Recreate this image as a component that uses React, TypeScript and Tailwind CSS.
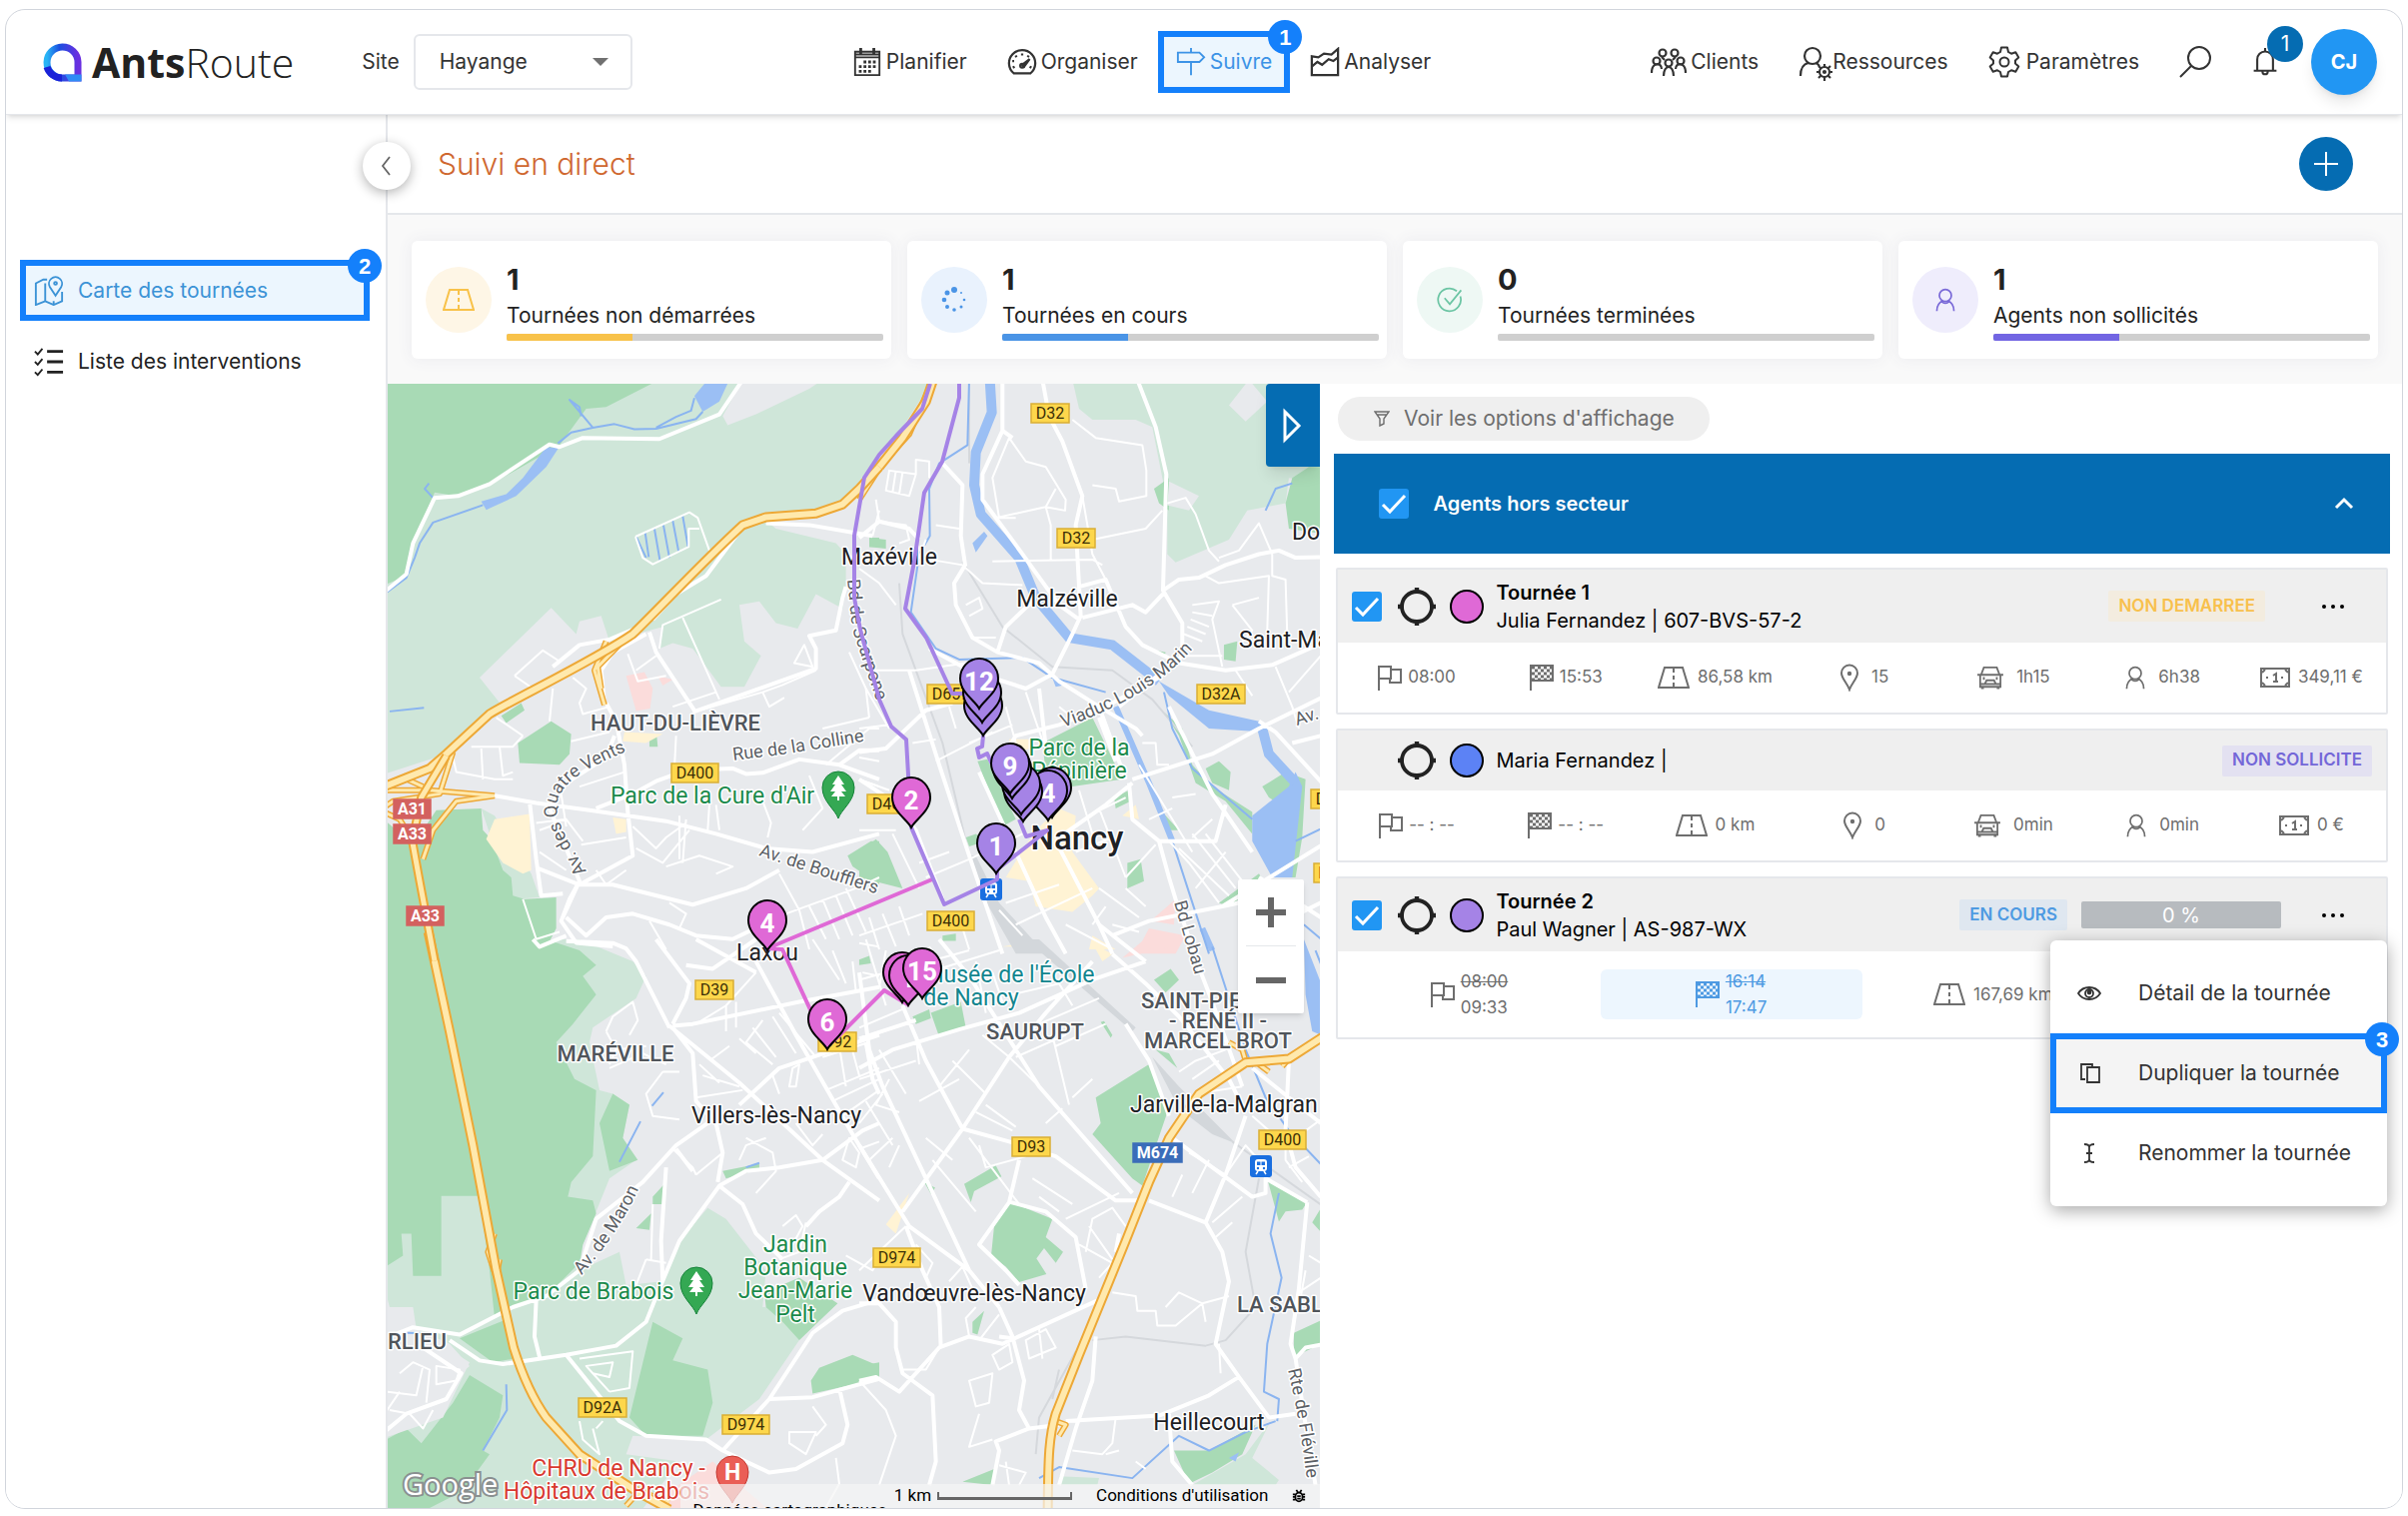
import { useState, type ReactNode } from 'react';
import { clsx } from 'clsx';

type IconProps = { className?: string };

/* ---------- Icons ---------- */

function Svg({ className, box = '0 0 32 32', width = 2, children }: IconProps & { box?: string; width?: number; children: ReactNode }) {
  return (
    <svg className={clsx('shrink-0', className)} viewBox={box} fill="none" stroke="currentColor" strokeWidth={width} aria-hidden="true">
      {children}
    </svg>
  );
}

const CalendarIcon = ({ className }: IconProps) => (
  <Svg className={className}>
    <path d="M3 5h26v25H3zM3 11h26" />
    <path d="M3 8h26" strokeWidth={2} />
    <path d="M9 1v7M23 1v7" strokeWidth={3} />
    <path d="M12 16h3m2 0h3m2 0h3M7 21h3m2 0h3m2 0h3m2 0h3M7 26h3m2 0h3m2 0h3" strokeWidth={3} />
  </Svg>
);

const GaugeIcon = ({ className }: IconProps) => (
  <Svg className={className} width={2.4}>
    <path d="M7 28a14 14 0 1 1 18 0z" />
    <path d="M16 7v2M9 9l1 2M23 9l-1 2M5.500 15h2M6 22l2-1M26 22l-2-1" />
    <path d="M16 19l8-6-6 8z" fill="currentColor" />
    <circle cx="16" cy="20" r="2" />
  </Svg>
);

const SignIcon = ({ className }: IconProps) => (
  <Svg className={className}>
    <path d="M2 6h23l5 5-5 5H2zM16 1v5M16 16v14" />
  </Svg>
);

const ChartIcon = ({ className }: IconProps) => (
  <Svg className={className} width={2.4}>
    <path d="M2 10v20h28V2l-7 6-8-1-6 4zM2 21l6-5 5 3 7-6 5 2 5-4" />
  </Svg>
);

const ClientsIcon = ({ className }: IconProps) => (
  <Svg className={className} box="0 0 36 32" width={2.2}>
    <circle cx="12" cy="7" r="3.500" />
    <circle cx="24" cy="7" r="3.500" />
    <circle cx="6" cy="15" r="3.500" />
    <circle cx="30" cy="15" r="3.500" />
    <circle cx="18" cy="17" r="3.500" />
    <path d="M1 27c0-11 10-11 10-4M35 27c0-11-10-11-10-4M13 30c0-12 10-12 10 0M11 11l3 3M25 11l-3 3" />
  </Svg>
);

const ResourceIcon = ({ className }: IconProps) => (
  <Svg className={className} box="0 0 34 36" width={2.2}>
    <circle cx="14" cy="10" r="8" />
    <path d="M2 30c0-7 3-12 8-13M18 17l3 3" />
    <circle cx="26" cy="26" r="5" />
    <circle cx="26" cy="26" r="1" />
    <path d="M26 18v3M26 31v4M18 26h3M31 26h3M20 20l3 3M29 29l3 3M32 20l-3 3M23 29l-3 3" />
  </Svg>
);

const GearIcon = ({ className }: IconProps) => (
  <Svg className={className}>
    <path
      strokeLinejoin="round"
      d="M13 1.500h6l1 4.500 3 1.700 4.300-1.400 3 5.200-3.300 3v3l3.300 3-3 5.200-4.300-1.400-3 1.700-1 4.500h-6l-1-4.500-3-1.700-4.300 1.400-3-5.200 3.300-3v-3l-3.300-3 3-5.200L9 7.700 12 6z"
    />
    <circle cx="16" cy="16" r="4.500" />
  </Svg>
);

const SearchIcon = ({ className }: IconProps) => (
  <Svg className={className}>
    <circle cx="20" cy="12" r="11" />
    <path d="M12 20L1 31" />
  </Svg>
);

const BellIcon = ({ className }: IconProps) => (
  <Svg className={className} width={2.4}>
    <path d="M3 26h26M7 26V13a9 9 0 0 1 18 0v13M16 0v4M13 27a3 3 0 0 0 6 0" />
  </Svg>
);

const MapPinIcon = ({ className }: IconProps) => (
  <Svg className={className}>
    <path d="M12 27L2 31V8l8-4h4M12 27l9 4 9-4V17M12 27V8M21 31v-4" />
    <path d="M23 21l-6-9a7 7 0 1 1 12 0z" />
    <circle cx="23" cy="8" r="1.500" />
  </Svg>
);

const ChecklistIcon = ({ className }: IconProps) => (
  <Svg className={className} width={3}>
    <path d="M14 5h17M14 16h17M14 27h17" />
    <path d="M1 5l3 3 5-6M1 16l3 3 5-6M1 27l3 3 5-6" strokeWidth={2} />
  </Svg>
);

const RoadIcon = ({ className }: IconProps) => (
  <Svg className={className} box="0 0 32 24">
    <path d="M7 2h18l6 20H1zM16 2v5M16 10v4M16 17v5" />
  </Svg>
);

const DotsSpinner = ({ className }: IconProps) => (
  <svg className={className} viewBox="0 0 26 26" fill="currentColor" aria-hidden="true">
    <circle cx="13" cy="3" r="3" />
    <circle cx="6" cy="6" r="2.500" />
    <circle cx="3" cy="13" r="2.300" />
    <circle cx="6" cy="20" r="2" />
    <circle cx="13" cy="23" r="1.800" />
    <circle cx="20" cy="20" r="1.500" />
    <circle cx="23" cy="13" r="1.300" />
    <circle cx="20" cy="6" r="1" />
  </svg>
);

const CheckCircle = ({ className }: IconProps) => (
  <Svg className={className}>
    <path d="M24 6a13 13 0 1 0 4 6M10 14l6 7L29 5" />
  </Svg>
);

const PersonIcon = ({ className }: IconProps) => (
  <Svg className={className} box="0 0 24 28">
    <circle cx="12" cy="9" r="7" />
    <path d="M2 27c0-6 3-10 7-12M22 27c0-6-3-10-7-12M8 15c1 4 7 4 8 0" />
  </Svg>
);

const FunnelIcon = ({ className }: IconProps) => (
  <Svg className={className} box="0 0 16 16" width={1.4}>
    <path d="M1 1h14L10 8v5l-4 2V8zM3 4h10" />
  </Svg>
);

const TargetIcon = ({ className }: IconProps) => (
  <Svg className={className} box="0 0 38 38" width={3.8}>
    <circle cx="19" cy="19" r="15" />
    <path d="M19 0v6M19 32v6M0 19h6M32 19h6" strokeWidth={4.4} />
  </Svg>
);

const FlagIcon = ({ className }: IconProps) => (
  <Svg className={className} box="0 0 24 26">
    <path d="M1 26V2h12v12H1M13 5h10v13H12v-4" />
  </Svg>
);

const FinishIcon = ({ className }: IconProps) => (
  <Svg className={className} box="0 0 24 26">
    <path d="M1 26V1h22v15H1" />
    <path d="M2 3h21M2 9h21M2 15h21" strokeDasharray="3 3" strokeWidth={3} />
    <path d="M5 6h18M5 12h18" strokeDasharray="3 3" strokeWidth={3} />
  </Svg>
);

const PlaceIcon = ({ className }: IconProps) => (
  <Svg className={className} box="0 0 20 28">
    <path d="M10 26C8 20 2 15 2 9.500a8 8 0 0 1 16 0C18 15 12 20 10 26z" />
    <circle cx="10" cy="10" r="1.200" fill="currentColor" />
  </Svg>
);

const CarIcon = ({ className }: IconProps) => (
  <Svg className={className} box="0 0 28 26">
    <path d="M4 10l3-8h14l3 8M0 10h28M3 10v13h22V10M3 20h22M8 20l2-4h8l2 4" />
    <path d="M6 14h2M20 14h2M4 24h3M21 24h3" strokeWidth={3} />
  </Svg>
);

const MoneyIcon = ({ className }: IconProps) => (
  <Svg className={className} box="0 0 30 20">
    <path d="M1 1h28v18H1z" />
    <path d="M13 8l3-2v8M13 14h5" />
    <path d="M7 9v2M22 9v2M2 5l3-3M28 5l-3-3M2 15l3 3M28 15l-3 3" />
  </Svg>
);

const EyeIcon = ({ className }: IconProps) => (
  <Svg className={className} box="0 0 24 14" width={1.8}>
    <path d="M1 7c5-8 17-8 22 0-5 8-17 8-22 0z" />
    <circle cx="12" cy="7" r="4" />
    <circle cx="12" cy="6" r="1.500" fill="currentColor" />
  </Svg>
);

const CopyIcon = ({ className }: IconProps) => (
  <Svg className={className} box="0 0 20 20" width={1.8}>
    <path d="M7 4h12v15H7zM5 16H1V1h11v3" />
  </Svg>
);

const CursorIcon = ({ className }: IconProps) => (
  <Svg className={className} box="0 0 12 20" width={1.8}>
    <path d="M1 1c3 0 5 1 5 3 0-2 2-3 5-3M1 19c3 0 5-1 5-3 0 2 2 3 5 3M6 4v12M3 10h6" />
  </Svg>
);

const Dots = () => (
  <svg className="h-2 w-6" viewBox="0 0 24 8" aria-hidden="true">
    <circle cx="3" cy="4" r="2" />
    <circle cx="12" cy="4" r="2" />
    <circle cx="21" cy="4" r="2" />
  </svg>
);

function Step({ n }: { n: number }) {
  return (
    <span className="absolute -top-[17px] -right-[18px] z-20 flex size-[34px] items-center justify-center rounded-full bg-[#1480fb] font-['Liberation_Sans',sans-serif] text-[22px] font-bold text-white">
      {n}
    </span>
  );
}

/* ---------- Header ---------- */

function Logo() {
  return (
    <a href="#" className="flex items-center gap-2.5" aria-label="AntsRoute">
      <svg className="size-10" viewBox="0 0 40 40" aria-hidden="true">
        <defs>
          <linearGradient id="ring" x1="0" y1="0" x2="1" y2="0">
            <stop offset="0" stopColor="#28b4f5" />
            <stop offset=".4" stopColor="#1b4ee0" />
            <stop offset="1" stopColor="#6a2fe0" />
          </linearGradient>
        </defs>
        <path d="M36 36V20A15.500 15.500 0 1 0 20 36z" fill="none" stroke="url(#ring)" strokeWidth="7" />
        <path d="M5 25a15.500 15.500 0 0 0 15 11" fill="none" stroke="#1a22d8" strokeWidth="7" />
        <path d="M23 32.500h16.500V39.500H27z" fill="#2f8bf5" />
      </svg>
      <span className="font-['Open_Sans',sans-serif] text-[41px] leading-none text-[#222]">
        <span className="font-bold">Ants</span>
        <span className="font-light">Route</span>
      </span>
    </a>
  );
}

function NavLink({ icon, children, active }: { icon: ReactNode; children: ReactNode; active?: boolean }) {
  return (
    <a
      href="#"
      className={clsx(
        'relative flex h-[62px] items-center gap-1',
        active ? 'border-6 border-[#1480fb] bg-[#ecf6fe] px-3 text-[#3c93e6]' : 'px-5',
      )}
    >
      {icon}
      {children}
      {active && <Step n={1} />}
    </a>
  );
}

function Header() {
  return (
    <header className="relative z-20 flex h-[105px] items-center justify-between rounded-t-[20px] border-b border-gray-200 bg-white pr-[25px] pl-9 text-[21px] text-[#333] shadow-md">
      <div className="flex items-center">
        <Logo />
        <label htmlFor="site" className="ml-17 pr-3.5">
          Site
        </label>
        <div className="relative">
          <select id="site" className="h-14 w-[219px] appearance-none rounded-md border-2 border-gray-200 bg-white px-6">
            <option>Hayange</option>
          </select>
          <svg className="pointer-events-none absolute top-6 right-6 h-2 w-4 fill-[#707070]" viewBox="0 0 16 8">
            <path d="M0 0h16L8 8z" />
          </svg>
        </div>
      </div>

      <nav className="flex items-center">
        <NavLink icon={<CalendarIcon className="size-[30px]" />}>Planifier</NavLink>
        <NavLink icon={<GaugeIcon className="size-[30px]" />}>Organiser</NavLink>
        <NavLink active icon={<SignIcon className="size-[30px]" />}>
          Suivre
        </NavLink>
        <NavLink icon={<ChartIcon className="size-[30px]" />}>Analyser</NavLink>
      </nav>

      <div className="flex items-center gap-10">
        <a href="#" className="flex items-center gap-1">
          <ClientsIcon className="h-8 w-9" />
          Clients
        </a>
        <a href="#" className="flex items-center">
          <ResourceIcon className="mt-1 h-9 w-[34px]" />
          Ressources
        </a>
        <a href="#" className="flex items-center gap-1.5">
          <GearIcon className="size-8" />
          Paramètres
        </a>
        <button aria-label="Rechercher">
          <SearchIcon className="size-8" />
        </button>
        <button aria-label="Notifications" className="relative">
          <BellIcon className="h-8 w-7" />
          <span className="absolute -top-5 -right-6 flex size-9 items-center justify-center rounded-full bg-[#056cb2] text-white">1</span>
        </button>
        <button className="-ml-2 size-[66px] rounded-full bg-[#2196f3] text-xl font-bold text-white shadow-lg">CJ</button>
      </div>
    </header>
  );
}

function Sidebar() {
  return (
    <aside className="relative z-10 w-[382px] shrink-0 border-r-2 border-gray-200 bg-white pt-[145px] pl-3.5 text-[21px] text-[#222]">
      <button
        aria-label="Réduire le menu"
        className="absolute top-[27px] -right-[25px] flex size-12 items-center justify-center rounded-full bg-white shadow-[0_3px_12px_rgba(0,0,0,0.3)]"
      >
        <Svg className="size-5 text-[#666]" box="0 0 20 20" width={1.8}>
          <path d="M13 1L6 10l7 9" />
        </Svg>
      </button>
      <a href="#" className="relative flex h-[61px] w-[350px] items-center gap-3.5 border-6 border-[#1480fb] bg-[#ecf6fe] pl-2 text-[#3c93d6]">
        <MapPinIcon className="size-[30px]" />
        Carte des tournées
        <Step n={2} />
      </a>
      <a href="#" className="mt-2.5 flex h-[61px] items-center gap-3.5 pl-3.5">
        <ChecklistIcon className="size-[30px]" />
        Liste des interventions
      </a>
    </aside>
  );
}

/* ---------- Statistics ---------- */

const STATS = [
  { value: 1, label: 'Tournées non démarrées', tint: 'bg-[#fef6e6] text-[#f8c24a]', bar: 'bg-[#f8c24a]', icon: <RoadIcon className="h-6 w-8" /> },
  { value: 1, label: 'Tournées en cours', tint: 'bg-[#e9f2fd] text-[#4a94e6]', bar: 'bg-[#4a94e6]', icon: <DotsSpinner className="size-[26px]" /> },
  { value: 0, label: 'Tournées terminées', tint: 'bg-[#eef8f4] text-[#6cc5a4]', bar: '', icon: <CheckCircle className="size-7" /> },
  { value: 1, label: 'Agents non sollicités', tint: 'bg-[#efedfc] text-[#7a6ad8]', bar: 'bg-[#7265e3]', icon: <PersonIcon className="h-6 w-[22px]" /> },
];

function Stats() {
  return (
    <section className="grid grid-cols-4 gap-4 bg-[#f9f9f9] px-6 pt-[26px] pb-[25px]">
      {STATS.map((s) => (
        <div key={s.label} className="flex h-[118px] items-center gap-[15px] rounded-md bg-white pr-2 pl-3.5 shadow-[0_0_16px_#ebebef]">
          <div className={clsx('flex size-[66px] shrink-0 items-center justify-center rounded-full', s.tint)}>{s.icon}</div>
          <div className="flex-1 pt-0.5 text-[#222]">
            <div className="text-[29px] leading-9 font-bold">{s.value}</div>
            <div className="text-[21px] leading-9">{s.label}</div>
            <div className="h-[7px] overflow-hidden rounded-xs bg-[#cfcfcf]">
              <div className={clsx('h-full w-1/3', s.bar)} />
            </div>
          </div>
        </div>
      ))}
    </section>
  );
}

/* ---------- Map ---------- */

// The map is cut in four sheets, each with a grid of its own.
const SHEETS = {
  nw: 'translate(380 380) scale(.3333 .3635)',
  ne: 'translate(860 380) scale(.3333 .3635)',
  sw: 'translate(380 940) scale(.3333 .368)',
  se: 'translate(860 940) scale(.3333 .368)',
};

type Layer = { fill?: string; stroke?: string; width?: number } & Partial<Record<keyof typeof SHEETS, string>>;

const HIGHWAY = {
  nw: 'M0 1125L150 1070 200 1030 330 920C400 880 640 775 760 700 850 620 960 510 1090 400L1160 378 1310 368 1390 343 1440 300 1500 240',
  ne: 'M60 240L130 160 200 60 222 0',
  sw: 'M146 -20L210 250 280 560 350 900 402 1110C430 1190 460 1250 500 1300L600 1400 770 1500 870 1550',
  se: 'M1400 260L1290 325 1160 335 1020 420 930 540 870 660 800 820 660 1130 590 1290C570 1350 567 1400 566 1560',
};

const RAMPS = {
  nw: 'M200 1035L125 1150 98 1270 120 1380 165 1600M220 1025L180 1140 40 1160 0 1185M345 1145L150 1130 0 1130M345 1145L230 1160 160 1240 130 1320M0 1185L60 1210 100 1270M675 895L645 800 680 720M665 850L655 790 730 720M70 1095L130 1120',
  ne: 'M0 330L70 230 150 150 220 0',
  sw: 'M345 800L325 850 350 920 360 870M740 1540L780 1500 870 1530',
  se: 'M1110 280L1150 300 1160 330M1200 340L1230 360M1290 325L1270 345M600 1350L620 1320 590 1310',
};

const LAYERS: Layer[] = [
  {
    fill: '#cfe6d9',
    nw: 'M0 0H1500V220L1440 300 1390 350 1300 370 1150 380 1190 410 1370 450 1400 480V560L1390 630 1310 590 1255 685 1190 670 1140 610 1080 620 1095 720 1145 760 1095 845H1025L940 740 880 725 840 740 850 680 690 720 665 650 600 665 590 700 515 628 300 820 370 900 200 1030 0 1090ZM305 1180L345 1200 455 1360 480 1425 395 1430Z',
    ne: 'M0 0H222L110 160 20 250 0 280ZM640 0H1400V280L1290 270 1280 340 1165 360 1110 440 950 503 925 480 925 340 880 130 830 110 700 110 660 80Z',
    sw: 'M0 0H600L760 60 800 100 770 160 640 240 630 280 660 410 700 420 750 450 730 540 770 600 690 650 610 830 600 900 720 850 740 940 850 930 900 820 985 730 1040 760 1160 900 1150 1000 1375 990 1260 1090 1140 1250 980 1360 760 1350 740 1400 900 1420 780 1560H0V1360L270 1160 210 1100 110 1060 100 1000 30 1000 0 900Z',
    se: 'M1160 1400L1235 1310 1180 1410 1260 1470 1250 1484H1000ZM600 1460L720 1465 715 1484H600Z',
  },
  {
    fill: '#a8dab5',
    nw: 'M0 0H840L680 75 620 80 540 180 330 290 230 320 165 310 100 450 80 540 0 570ZM0 1200L100 1280 170 1185 305 1180 310 1240 335 1265 370 1350 395 1370 400 1420 435 1430 530 1425V1510L480 1600H0ZM415 1000L515 940 575 975 570 1030 540 1060 420 1055ZM365 925L425 890 435 910 380 945ZM810 980H832L835 1010H810ZM1405 1310L1475 1270H1500V1390L1420 1340ZM1475 435H1500V460H1470Z',
    ne: 'M1280 340L1300 270 1350 240H1400V425L1290 410ZM885 300L930 270V360L900 340ZM355 1050L385 1045 470 1210 430 1230ZM550 1000L700 930 790 1100 640 1120 560 1080ZM915 915L970 960 1000 1060 1060 1120 1180 1190V1250L1100 1160 1010 1110 960 980ZM1040 1070L1080 1050 1115 1080 1110 1130 1060 1110ZM1210 1120L1280 1080 1340 1100 1330 1260 1310 1370H1270L1280 1180 1230 1150ZM765 1150L810 1130 815 1160 770 1180ZM900 1180L960 1240H920ZM805 1330L845 1320 855 1380 805 1400ZM0 1300L50 1265 85 1300 130 1400 0 1370ZM1080 1440L1200 1360 1215 1380 1110 1450ZM30 435L80 440V465L30 460ZM250 1530L290 1525V1545H250ZM1095 730L1135 720 1130 775 1095 770ZM320 1260L350 1250 380 1270 330 1285ZM890 745L920 750 915 765Z',
    sw: 'M0 0H500L600 30 650 70 610 100 650 150 580 230 530 280 585 380 650 410 640 590 575 660 565 700 640 710 650 745 610 830 600 880 500 970 400 1000 345 1030 330 900 300 698H185V915H100L95 800H65L70 860 0 900V665L50 670 78 698 0 695ZM700 420L750 450 730 540 775 600 690 630 660 500ZM820 1040L910 1085 880 1145 985 1170 1000 1260 970 1350 800 1350 750 1300ZM240 1085L375 1035 405 1140 340 1150ZM270 1185L370 1240 360 1300 310 1390 330 1400 250 1500 120 1560H0V1370L80 1330 125 1370 220 1260ZM1155 960L1260 920 1375 990 1260 1090 1210 1040 1160 1000ZM1295 1200L1320 1165 1420 1130 1500 1160V1195L1300 1235ZM1030 630L1140 610V625L1040 650ZM820 700L855 665 850 720H820ZM770 785L815 745 810 790ZM1440 55L1470 45 1475 65 1440 70Z',
    se: 'M710 430L870 340 925 470 850 670 820 650 700 530 725 500ZM405 780L455 715 580 760 560 810 612 850 590 880 555 840 530 870 440 890 396 860ZM440 890L530 865 562 910 480 932ZM315 665L410 615 427 645 345 685 335 715ZM215 200L305 170 320 240 240 265ZM160 210L210 190 215 215 170 230ZM945 1390L1050 1390 1190 1320 1150 1400 1060 1450 990 1480ZM885 110L935 80 960 110 920 145ZM1225 650L1345 715 1330 735 1280 740 1260 768ZM1305 1070L1400 1030V1095L1305 1135ZM1360 770L1400 710V810ZM0 1160L60 1150V1190L0 1200ZM310 1475L405 1440 400 1484ZM195 660L228 675 215 692ZM340 1040L375 1010 355 1075 340 1070ZM725 225L735 222 760 260 755 268ZM890 300L930 310 955 350Z',
  },
  { fill: '#e8eaed', nw: 'M1030 100L1045 125 1130 95 1290 25 1330 0H1090Z', ne: 'M1110 70L1170 0 1225 60 1160 115ZM930 280L1020 320 990 360 925 345Z', sw: 'M0 1110L200 1110 270 1150 190 1300 0 1360Z' },
  {
    fill: '#fff3d4',
    nw: 'M345 1210L450 1195 455 1350 430 1360 370 1330 320 1265ZM735 970L850 975 800 1000 730 995ZM700 1205L740 1210V1245L710 1250Z',
    ne: 'M530 1240L600 1180 650 1200 640 1300 720 1400 700 1420 640 1465 530 1450 510 1380 440 1370 480 1310ZM450 990L510 990 530 1010 460 1030ZM790 1200L830 1170 840 1210ZM700 1530L770 1568H690Z',
    se: 'M80 775L150 690 110 800ZM430 20L540 0V20ZM700 10L760 40 730 60Z',
  },
  { fill: '#fbdcdb', nw: 'M740 815L795 805 820 850 812 905 770 912ZM835 815L880 825 850 842Z', ne: 'M875 1490L950 1430 945 1500ZM830 1580L870 1510 980 1530 950 1580Z', sw: 'M840 1520L1000 1420 1180 1560H860Z', se: 'M790 50L870 -10 950 -10 940 20Z' },
  { fill: '#d3d7db', ne: 'M330 1310L350 1310 420 1440 560 1580H470L370 1420Z', se: 'M880 320L960 400 1130 555 1060 530 960 460ZM500 0H540L830 240 820 250Z' },
  {
    stroke: '#d5d8dc',
    width: 2,
    ne: 'M330 0V230M120 560L130 700 250 1000 330 1310M310 500L430 680 580 790 760 800 880 880 1000 1010',
    se: 'M1120 550L1400 730M1200 650L1160 850 1190 1000 1100 1090 1040 1105 800 1080 700 1090M600 1170L580 1250M650 1120L540 1300 530 1400',
  },
  {
    fill: '#9bbff4',
    nw: 'M305 335L380 315 430 270 500 185 537 188 500 240 410 320 320 358ZM945 45L985 0H1050L1020 60 970 88Z',
    ne: 'M1180 1200L1290 1120 1310 1080 1330 1120 1300 1370H1240L1180 1270ZM900 830L1050 910 1200 940 1220 970 1050 960 930 870ZM340 450L375 418 385 430 350 475ZM575 810L620 840 590 845Z',
    se: 'M1335 0L1400 150V265L1360 250 1340 150ZM1110 1410L1140 1395 1130 1420Z',
  },
  { stroke: '#9bbff4', width: 10, ne: 'M392 0L398 90 350 200 345 290 365 370 480 490 530 600 630 710 760 730 900 830M1210 960L1230 1030 1310 1110' },
  { stroke: '#9bbff4', width: 6, ne: 'M770 900L870 1110 940 1270', se: 'M1030 -30L1060 30' },
  {
    stroke: '#8ab4f0',
    width: 2,
    nw: 'M535 175L575 145 640 132 705 122 765 136 830 135 950 108 970 88M640 132L570 55 600 75 605 100M830 132L890 102 935 85 945 50M0 600L80 545 105 490 120 450 160 393 310 345M30 913L133 903M160 325L135 300 148 285M770 432L800 490M797 420L808 488M825 410L842 500M852 400L870 490M880 388L898 475M910 375L926 460',
    ne: 'M330 0L325 180 240 230 210 300 212 430 180 480 155 640 230 740 300 770 490 765 580 820 740 860M940 1270L1050 1580M1220 360L1250 300 1300 285M1310 1270L1400 1230M1335 1500L1400 1550M915 860L940 960 1000 1070 1180 1210',
    sw: 'M720 605L783 495M818 453L852 416M380 1210L382 1280 310 1390M80 1070L170 1072M1100 620L1140 608',
    se: 'M1060 20L1160 300 1220 430 1290 520 1400 625M1260 690L1235 800 1268 920 1225 1100 1215 1230 1260 1250 1255 1310M540 1465L600 1435 820 1465 960 1350 1050 1390 1160 1340 1250 1310M1370 30L1400 100',
  },
  {
    stroke: '#fff',
    width: 2,
    nw: 'M768 432L930 365 955 380 990 470M768 432L790 490 820 508 928 460V410H960M405 815L490 745 540 775 520 790M405 815L460 850M520 850L510 940M580 820L620 850 600 890 610 920 690 900M220 1040L230 1080 345 1100 400 1100M275 1010L400 1010 430 980M305 1015L310 1100M360 1010L370 1090 400 1080M430 980L350 930M840 740L850 675 1025 605M910 655L1020 880M880 900L1010 860M745 755L775 830 860 815M770 800L830 760M960 910L1150 860 1210 840 1310 800M1150 860L1170 900 1215 875M1275 730L1245 780 1300 790ZM890 980L885 1070M470 1220L560 1210 610 1270M480 1240L540 1220M545 1140L560 1230M480 1300L560 1350M605 1280L740 1260M760 1230L830 1290 860 1260 920 1220M770 1290L850 1330 930 1240M860 1340L960 1310 1060 1340 1010 1360M900 1200V1320M920 1210L910 1330M990 1170L985 1240M1010 1170L1020 1240M1150 1160L1175 1220 1165 1260M1290 1090L1330 1180 1270 1240M1200 1360L1260 1460 1290 1568M1290 1450L1340 1540M1330 1430L1380 1540M1370 1420L1420 1530M1400 1400L1460 1520M1220 1470L1430 1400 1500 1370M870 1440L920 1470 900 1510M810 1490L860 1568M430 1430L470 1540 540 1520M575 995L690 970M735 1080L600 1120M1410 750L1460 850 1470 930M1330 960L1470 930M1340 1060L1470 960 1500 960M1440 1040L1500 1050M1440 1100L1500 1120M740 1350L680 1390 650 1350M1480 430L1500 360',
    ne: 'M90 250L170 260 150 320 80 305ZM110 250L100 310M130 255L120 315M170 260V220L210 225V270M450 160L500 225 560 240 620 330 618 360 560 350 590 300M450 160L400 270 420 380 470 380M560 350L575 400V500M640 110L710 160 850 180 862 250V320L780 335 770 300 700 290M670 320L700 480 740 550M410 380L560 350M50 330L60 390 140 400 150 440 120 450M0 520L60 560 110 620M230 400L300 410M200 440L180 490 310 510M310 510L370 560 490 565M320 620L360 600 370 630 330 650M340 710H410M400 500L700 495 730 510M910 360L860 410 700 440M925 340L980 325 1010 370 1050 470 1080 500M1080 490L1140 470 1200 395 1240 480M1040 540L1080 560 1230 540 1225 690M1240 480V540L1280 550 1285 700M1120 620L1180 690 1150 720M1120 620L1200 600M1000 620L1080 610 1060 660 1090 790M1000 640L1060 650M995 660L1050 680M985 680L1040 700M975 700L1030 720M970 760L1090 760M1250 790L1300 900 1320 960M1130 800L1180 870M1386 760L1290 860M0 960L90 950M20 850L90 960M40 800L170 800M170 800L320 780M330 1000L460 950M440 900L470 1000M270 900L290 960M230 1050L400 970M0 1100L90 1130M160 1000L230 990M0 1240H110M100 1250L180 1400M180 1330L270 1300M200 1370L330 1320 490 1250M0 1530L190 1470M30 1480L60 1568M70 1470L110 1560M120 1450L150 1530M300 1480L330 1568M420 1460L490 1530M440 1440L600 1390M470 1500L700 1400M660 1130L700 1250M690 1200L800 1150M650 1300L760 1260M720 1180L800 1370M800 1370L890 1280M720 1400L840 1480M740 1450L700 1500M800 1400L860 1450M850 1000L890 1000 895 1060 930 1060M840 1060L1000 1300M870 1210L940 1180M930 1270L990 1330 1080 1440M960 1290L1110 1420M1000 1250L1130 1400M1010 1400L1100 1300M940 1150L1010 1140M1060 1210L1000 1260M1040 1250L1150 1380M760 1500L840 1520M620 1500L760 1568M500 860L560 1020M600 900L640 930',
    sw: 'M680 250L700 210 760 170 775 220 750 260M680 250L710 300 800 290M690 350L790 310 860 340M710 300L690 340M850 360L800 420 820 480 900 490M900 360L850 360M950 230L1040 180 1130 90M1040 180V250M1070 170V240M1200 200L1310 320M1180 210L1250 310M1150 220L1100 280 1180 340M1120 240L1190 320M1080 270L1130 310M970 370L1080 400M950 430L1090 410M960 340L1020 390M990 330L1050 290M1240 350L1260 340 1250 400 1230 400ZM1180 370L1200 420M1340 410L1500 350M1360 440L1500 380M1390 480L1500 410M1380 290L1400 400M1410 270L1440 370M1330 320L1470 280M1410 540L1390 600 1430 620 1440 580ZM1440 570L1500 550M1250 500L1300 560 1330 530M1100 540L1180 580 1190 630 1130 690M1080 600L1100 560 1160 540M950 640L1030 580M950 640L940 620 880 570M1210 780L1250 750 1270 780 1240 830M1280 770L1260 850 1200 870M1400 860L1480 900 1500 870M800 870L860 880M770 940L800 870M820 720L815 870M620 1160L700 1150 690 1190 640 1180ZM600 1140L760 1120 750 1220 690 1230M640 1180L690 1230M600 1310L610 1360 660 1400 640 1330M670 1310L650 1330M22 1230L110 1240 130 1160M60 1180L100 1150 150 1170 140 1260M170 1160L240 1170 230 1200 170 1210ZM30 1280L90 1290 130 1330 160 1280M0 1310L60 1230M1230 1340L1310 1340 1280 1400 1230 1370ZM1300 1270L1340 1320 1310 1350M1370 1410L1380 1480 1340 1545M1360 30L1400 120M1420 60L1430 140M1300 0L1380 110M1450 90L1500 100M1440 10L1500 20',
    se: 'M0 110L120 80M20 0L80 180M80 30L60 130M130 190L0 240M0 380L170 330M170 260L180 340M90 380L50 450 120 470M60 300L140 420M20 440L100 560M70 420L0 500M100 540L30 600M120 560L90 620M210 60L330 30M210 20L260 90M170 100L420 30M380 200L350 60M430 170L400 90M460 150L600 120 640 180M540 230L720 160M590 290L740 230M580 260L630 450M640 430L700 380M560 500L610 460M450 320L540 400M470 320L620 260M370 260L450 320M280 330L380 420M240 400L330 300M180 440L300 380M350 470L460 520M380 450L470 510M200 540L280 600M220 600L350 740M330 540L480 720M360 560L380 620 500 590M520 650L640 720M540 700L600 740M620 760L780 690M680 850L700 760 760 730 800 780M660 830L760 880 720 920M690 780L760 870M1010 420L1150 400M1000 380L1080 330M960 360L1010 330 1100 300M990 580L1100 640M970 640L940 700M1050 600L1000 690M1100 640L1160 560 1200 600M1060 770L1150 700M1070 810L1120 770M1180 480L1280 560 1386 490M1280 520V600L1330 660M1290 620L1350 590M1350 860L1386 880M1320 960L1386 920M760 960L830 970 835 1010 890 1010 895 1050 950 1050 1030 990 1110 970M920 1000L960 960 1030 990 1040 1040M1080 1100L1085 1180M1340 900L1320 1000M500 1090L560 1060 590 1110 510 1140ZM540 1060L550 1140M400 1130L450 1100 460 1150 420 1170ZM330 1200L400 1180 390 1260 350 1270ZM360 1290L330 1380 400 1360M420 1430L500 1450 480 1484M440 1420L450 1484M640 1390L730 1400 760 1370 770 1300M740 1400L780 1390M830 1420L860 1440M350 1000L320 1030 330 1080M420 1020L360 1090M170 830L220 880 200 920M270 930L310 890 340 950M0 900L140 780M130 1170L200 1170 240 1110M0 1200L80 1280 110 1350 60 1484',
  },
  {
    stroke: '#fff',
    width: 4,
    nw: 'M0 595L80 535 100 450 165 325 235 320 330 287 510 178 540 185 610 160 840 163 1020 95 1090 0M345 1145L470 1165 630 1185 860 1215 1010 1250 1160 1290 1300 1300 1500 1250M650 1180L760 1140 830 1105 920 1075 1060 1070 1100 1085 1150 1082 1260 1045 1380 1060 1500 1100M680 890L710 940 735 1060 745 1190 760 1310 680 1350 600 1390M675 890L665 800 700 750 800 700M450 1160L470 1320 485 1420 550 1415M475 1345L600 1390 700 1390 940 1445 1100 1400 1200 1350M600 1380L570 1430 545 1490 590 1550 700 1560M705 980L680 1040 560 1110 510 1180 560 1290 600 1380 550 1480M940 915L1310 795V740L1290 705 1370 690 1390 600 1400 570M810 695L830 750 945 910M520 790L600 730 690 715 780 680M1160 395L1290 400 1480 430M1090 405L980 540 890 590 820 660M560 1480L620 1530 680 1480 760 1470 870 1500 950 1530 1060 1540 1150 1500M1380 1060L1440 1020 1500 1020',
    ne: 'M430 0V140L370 260V330L490 480 600 620 660 660M550 0L570 100 610 170 670 320 650 400 665 650 640 700 580 810M835 0L890 130 922 260 912 580 970 670V760L780 900M912 580L960 550 1020 545 1100 510 1200 480 1260 470 1310 490 1400 488M912 590L860 640 820 620 670 655M660 570L740 550 800 680 850 730 960 780 1100 800 1240 785 1400 720M450 1010L470 980 600 950 760 890 900 820 970 760M250 230L310 290 305 430 318 510 285 560 290 620 340 710 415 750 540 780 600 830 720 900 800 1100M415 750L440 680 520 610M430 140L460 160M0 435L60 390 150 410 180 440M0 1025L80 1015 200 910 280 890M150 800L240 1060 330 1310 430 1580M210 740L330 800 500 850 580 810M360 1080L420 1200 560 1480 620 1580M540 850L560 1010M590 1270L720 1500 760 1580M820 1100L1060 1030 1200 960 1400 870M810 1110L820 1210 900 1270 1070 1270 1100 1170M820 1110L740 1170 600 1260M900 1270L930 1370 950 1430 1010 1590M1090 1450L1400 1275M1200 940L1250 970 1400 1120M1300 1000L1386 980M930 900L1060 1140 1180 1300M0 1100L100 1160 170 1240 250 1430M760 1530L870 1490 1090 1450 1140 1440M720 930L770 1050M850 980L830 960 720 900M1200 1370L1386 1480',
    sw: 'M460 0L480 20 560 -10M560 5L700 10 740 25 770 60 870 240M0 1090L100 1055 240 1075 400 1000 500 970 600 900 650 760 790 660 890 560 1000 490M210 1090L300 1145 370 1155 560 1130 710 1105 800 1040 840 950 900 820 1020 670 1100 630 1200 620 1330 600M850 930L845 820 860 620M870 235L1080 390 1330 600 1500 710M880 235L940 230 1260 170 1500 130M1130 60L1250 260 1420 530 1500 650M1330 600L1450 520 1500 500M560 1130L720 1310 800 1350 980 1360 1030 1390 1170 1450 1250 1440 1390 1370 1405 1320 1380 1220M1030 1390L1170 1250 1300 1070 1390 1010 1500 980M1170 1250L1300 1245 1500 1195M880 240L940 310 950 440 1010 500 1030 580 1015 660M830 0L930 120 920 160 880 230M920 70L1000 80 1130 0M470 980L465 1080 480 1135M1020 670L1090 720 1130 800 1210 870M1410 660L1380 700 1320 740 1280 780M1080 450L1200 350 1500 260M0 1350L80 1290 200 1250 245 1180 130 1110M890 570L940 630M1460 280L1480 380 1500 420M950 0L1130 90',
    se: 'M0 350L100 300 300 245 480 200 700 110 860 60M0 270L170 220M0 90L30 300 70 400 330 900M0 560L150 780 330 900 420 1000M310 515L130 740M310 515L450 320 560 200 700 60M130 180L200 330 310 515M330 100L540 400 820 690M240 0L330 100M310 515L450 550 590 590 770 710 860 710M870 710L1040 770 1090 850 1110 930 1070 1100 1140 1190 1230 1300 1310 1290M480 600L450 715 360 830 440 900 480 940M455 715L560 740 650 810 680 950M0 990L60 990 110 1040V1110L130 1180 220 1240 230 1420 210 1484M0 1200L50 1190 120 1230 240 1110 330 1080 430 1100 720 980M140 780L190 900 240 1000 245 1110M420 1000L460 1080 495 1200 480 1280 510 1330M600 1320L510 1330 410 1365 420 1390 400 1484M710 1080L700 1200 650 1330 600 1484M620 1310L900 1295 1050 1240 1140 1190M930 1290L940 1420 1000 1484M1160 480L1100 640 1040 770M1345 715L1320 950 1295 1100 1310 1140 1345 1350 1370 1484M940 540L1180 700 1220 690V650L1345 715M860 60L720 -40M1000 30L1060 170 1150 400M1180 350L1386 500M1290 330L1280 520 1310 620 1386 700M760 40L860 120 960 210 1110 380 1160 470M1310 1140L1340 1110 1400 1100M420 1080L460 1085M780 800L770 850M1210 -20L1386 -100M800 230L870 330 930 480',
  },
  { stroke: '#eda836', width: 6, ...RAMPS },
  { stroke: '#ffe9ad', width: 3, ...RAMPS },
  { stroke: '#eda836', width: 10, ...HIGHWAY },
  { stroke: '#ffe9ad', width: 6, ...HIGHWAY },
  { stroke: '#eda836', width: 9, nw: 'M200 1035L125 1150 98 1270 120 1380 165 1600' },
  { stroke: '#ffe9ad', width: 5, nw: 'M200 1035L125 1150 98 1270 120 1380 165 1600' },
];

// [text, x, baseline, size, colour, weight, anchor]
type Label = [string, number, number, number, string, number, 'start' | 'middle'];

const INK = '#202124';
const PARK = '#1b8a4b';
const AREA = '#50555b';

const LABELS: Label[] = [
  ['Maxéville', 890, 565, 23, INK, 400, 'middle'],
  ['Malzéville', 1068, 607, 23, INK, 400, 'middle'],
  ['Saint-Max', 1240, 648, 23, INK, 400, 'start'],
  ['Dommartemont', 1293, 540, 23, INK, 400, 'start'],
  ['HAUT-DU-LIÈVRE', 676, 731, 22, AREA, 500, 'middle'],
  ["Parc de la Cure d'Air", 713, 804, 23, PARK, 400, 'middle'],
  ['Parc de la', 1080, 756, 23, PARK, 400, 'middle'],
  ['Pépinière', 1080, 779, 23, PARK, 400, 'middle'],
  ['Nancy', 1078, 850, 33, INK, 500, 'middle'],
  ['Laxou', 768, 961, 23, INK, 400, 'middle'],
  ['MARÉVILLE', 616, 1062, 22, AREA, 500, 'middle'],
  ['Villers-lès-Nancy', 777, 1124, 23, INK, 400, 'middle'],
  ['Parc de Brabois', 594, 1300, 23, PARK, 400, 'middle'],
  ['Jardin', 796, 1253, 23, PARK, 400, 'middle'],
  ['Botanique', 796, 1276, 23, PARK, 400, 'middle'],
  ['Jean-Marie', 796, 1299, 23, PARK, 400, 'middle'],
  ['Pelt', 796, 1323, 23, PARK, 400, 'middle'],
  ['RLIEU', 388, 1350, 22, AREA, 500, 'start'],
  ['CHRU de Nancy -', 619, 1477, 23, '#d8392f', 400, 'middle'],
  ['Hôpitaux de Brabois', 607, 1500, 23, '#d8392f', 400, 'middle'],
  ["Musée de l'École", 1010, 983, 23, '#12858e', 400, 'middle'],
  ['de Nancy', 972, 1006, 23, '#12858e', 400, 'middle'],
  ['SAURUPT', 1036, 1040, 22, AREA, 500, 'middle'],
  ['SAINT-PIERRE', 1142, 1009, 22, AREA, 500, 'start'],
  ['- RENÉ II -', 1219, 1029, 22, AREA, 500, 'middle'],
  ['MARCEL BROT', 1219, 1049, 22, AREA, 500, 'middle'],
  ['Jarville-la-Malgran', 1131, 1113, 23, INK, 400, 'start'],
  ['Vandœuvre-lès-Nancy', 975, 1302, 23, INK, 400, 'middle'],
  ['LA SABLIÈRE', 1238, 1313, 22, AREA, 500, 'start'],
  ['Heillecourt', 1210, 1431, 23, INK, 400, 'middle'],
];

const STREETS = [
  { id: 'colline', name: 'Rue de la Colline', d: 'M734 761L790 754 870 741' },
  { id: 'bouf', name: 'Av. de Boufflers', d: 'M759 856L885 897' },
  { id: 'vents', name: 'Av. des Quatre Vents', d: 'M587 872C568 840 550 815 560 796S590 768 626 752' },
  { id: 'viaduc', name: 'Viaduc Louis Marin', d: 'M1064 728C1110 712 1160 690 1200 642' },
  { id: 'scarpone', name: 'Bd de Scarpone', d: 'M848 580L853 630 882 715' },
  { id: 'lobau', name: 'Bd Lobau', d: 'M1175 903L1200 990' },
  { id: 'maron', name: 'Av. de Maron', d: 'M582 1276C600 1256 628 1220 646 1174' },
  { id: 'fleville', name: 'Rte de Fléville', d: 'M1289 1371C1296 1400 1304 1440 1310 1500' },
  { id: 'avd', name: 'Av. Carnot', d: 'M1298 726L1390 697' },
];

const SHIELDS: [string, number, number, number][] = [
  ['D32', 1032, 404, 38],
  ['D32', 1058, 529, 38],
  ['D32A', 1198, 685, 48],
  ['D657', 928, 685, 47],
  ['D400', 672, 764, 47],
  ['D400', 868, 795, 47],
  ['D400', 928, 912, 47],
  ['D32', 1312, 790, 38],
  ['D2B', 1315, 864, 38],
  ['D39', 696, 981, 38],
  ['D92', 819, 1033, 38],
  ['D92A', 579, 1399, 48],
  ['D974', 723, 1416, 47],
  ['D93', 1013, 1138, 38],
  ['D974', 874, 1249, 47],
  ['D400', 1260, 1131, 47],
  ['A31', 394, 800, 37],
  ['A33', 394, 825, 37],
  ['A33', 407, 907, 37],
  ['M674', 1134, 1144, 49],
];

const PINK = '#df69d6';
const VIOLET = '#a583e6';

const PINS: [string, number, number, string][] = [
  ['5', 984, 736, VIOLET],
  ['7', 983, 723, VIOLET],
  ['12', 980, 709, VIOLET],
  ['', 1053, 818, VIOLET],
  ['4', 1049, 821, VIOLET],
  ['', 1024, 822, VIOLET],
  ['', 1022, 815, VIOLET],
  ['', 1013, 799, VIOLET],
  ['9', 1011, 794, VIOLET],
  ['1', 997, 874, VIOLET],
  ['2', 912, 828, PINK],
  ['4', 768, 951, PINK],
  ['6', 828, 1050, PINK],
  ['', 903, 1003, PINK],
  ['1', 909, 1006, PINK],
  ['15', 923, 999, PINK],
];

function Shield({ name, x, y, w }: { name: string; x: number; y: number; w: number }) {
  const color = name[0] === 'A' ? '#d3615f' : name[0] === 'M' ? '#3b6db9' : '#fdd74c';
  const local = name[0] === 'D';
  return (
    <g>
      <rect x={x} y={y} width={w} height="19" fill={color} stroke={local ? '#d9ae35' : color} strokeWidth="1.500" />
      <text x={x + w / 2} y={y + 15} textAnchor="middle" fontSize="16" fontWeight={local ? 400 : 700} fill={local ? '#3b2f06' : '#fff'}>
        {name}
      </text>
    </g>
  );
}

function TreePin({ x, y }: { x: number; y: number }) {
  return (
    <g transform={`translate(${x} ${y})`}>
      <path d="M0 0C-3-9-16-17-16-31A16 16 0 1 1 16-31C16-17 3-9 0 0z" fill="#34a853" stroke="#16833a" />
      <path d="M0-43l6 9H3l5 7H3l4 5H1v4h-2v-4h-6l4-5h-5l5-7h-3z" fill="#fff" />
    </g>
  );
}

function Station({ x, y }: { x: number; y: number }) {
  return (
    <g transform={`translate(${x} ${y})`}>
      <rect width="22" height="22" rx="3" fill="#1a6fe0" />
      <rect x="5" y="4" width="12" height="12" rx="3" fill="#fff" />
      <path d="M7 6.500h3.500v3.500H7zM11.500 6.500H15V10h-3.500z" fill="#1a6fe0" />
      <circle cx="8" cy="13" r="1.200" fill="#1a6fe0" />
      <circle cx="14" cy="13" r="1.200" fill="#1a6fe0" />
      <path d="M8 16l-2 3M14 16l2 3" stroke="#fff" strokeWidth="1.500" />
    </g>
  );
}

function MapDrawing() {
  return (
    <svg
      className="absolute inset-0 size-full font-[Roboto,sans-serif]"
      viewBox="388 384 934 1125"
      preserveAspectRatio="xMinYMin slice"
      role="img"
      aria-label="Carte de Nancy"
    >
      <rect x="388" y="384" width="934" height="1125" fill="#e8eaed" />
      {LAYERS.map((layer, i) =>
        (Object.keys(SHEETS) as (keyof typeof SHEETS)[]).map((key) =>
          layer[key] ? (
            <path
              key={key + i}
              d={layer[key]}
              transform={SHEETS[key]}
              fill={layer.fill ?? 'none'}
              stroke={layer.stroke}
              strokeWidth={layer.width}
              strokeLinejoin="round"
              vectorEffect="non-scaling-stroke"
            />
          ) : null,
        ),
      )}

      {SHIELDS.map(([name, x, y, w]) => (
        <Shield key={name + x} name={name} x={x} y={y} w={w} />
      ))}

      <g stroke="#fff" strokeWidth="3" strokeLinejoin="round" paintOrder="stroke">
        {LABELS.map(([text, x, y, size, fill, weight, anchor]) => (
          <text key={text} x={x} y={y} fontSize={size} fill={fill} fontWeight={weight} textAnchor={anchor}>
            {text}
          </text>
        ))}
        {STREETS.map((s) => (
          <g key={s.id}>
            <path id={s.id} d={s.d} fill="none" stroke="none" />
            <text fontSize="18" fill="#5b6065">
              <textPath href={`#${s.id}`}>{s.name}</textPath>
            </text>
          </g>
        ))}
      </g>

      <TreePin x={839} y={819} />
      <TreePin x={697} y={1315} />
      <Station x={981} y={879} />
      <Station x={1251} y={1156} />
      <path d="M733 1504c-3-8-16-17-16-31a16 16 0 1 1 32 0c0 14-13 23-16 31z" fill="#ea5e56" stroke="#c5372f" />
      <text x="733" y="1481" fontSize="23" fontWeight="700" fill="#fff" textAnchor="middle">
        H
      </text>

      {/* Tracés des tournées */}
      <g fill="none" strokeWidth="4" strokeLinejoin="round">
        <path stroke={PINK} d="M933 880L768 949 783 950 828 1047 840 1036 885 991 910 1006" />
        <path
          stroke={VIOLET}
          d="M931 384L923 409 897 436 880 455 865 478 855 536V598L861 630 880 700 892 727 907 740 912 828 945 905 998 880V870L1048 831 1027 837 1020 820M960 384V398L943 462 925 493 915 562 906 609 927 638 953 694 963 694M984 736L983 747 978 749 980 758 988 754 993 765"
        />
      </g>
      {PINS.map(([n, x, y, fill], i) => (
        <g key={i} transform={`translate(${x} ${y})`}>
          <path d="M0 0C-4-8-19-16-19-30A19 20 0 1 1 19-30C19-16 4-8 0 0z" fill={fill} stroke="#000" strokeWidth="2" />
          <text y="-18" fontSize="26" fontWeight="700" fill="#fff" textAnchor="middle">
            {n}
          </text>
        </g>
      ))}

      <text x="403" y="1496" fontSize="29" fontWeight="500" fill="#fff" stroke="#8a9090" strokeWidth="4" paintOrder="stroke" className="font-['Open_Sans',sans-serif]">
        Google
      </text>
    </svg>
  );
}

function MapView() {
  return (
    <section className="relative overflow-hidden">
      <MapDrawing />
      <button aria-label="Agrandir la carte" className="absolute top-0 right-0 flex h-[83px] w-[54px] items-center justify-center rounded-l-sm bg-[#056cb2] text-white shadow-lg">
        <Svg className="h-9 w-5" box="0 0 20 36" width={3}>
          <path d="M2 4l14 14L2 32z" />
        </Svg>
      </button>
      <div className="absolute right-4 bottom-[495px] flex w-[66px] flex-col rounded-xs bg-white text-[#666] shadow-md">
        <button aria-label="Zoom avant" className="mx-2 flex h-[67px] items-center justify-center border-b border-gray-200">
          <Svg className="size-[30px]" box="0 0 30 30" width={6}>
            <path d="M15 0v30M0 15h30" />
          </Svg>
        </button>
        <button aria-label="Zoom arrière" className="flex h-[67px] items-center justify-center">
          <Svg className="size-[30px]" box="0 0 30 30" width={6}>
            <path d="M0 15h30" />
          </Svg>
        </button>
      </div>
      <div className="absolute right-0 bottom-0 flex h-6 w-[640px] items-center justify-end gap-6 overflow-hidden bg-[#f5f5f5]/70 pr-3.5 font-[Roboto,sans-serif] text-[17px] text-black">
        <span className="absolute top-4 left-3 leading-5">Données cartographiques</span>
        <div className="flex items-center gap-1.5">
          1 km
          <span className="h-2 w-[135px] border-x-2 border-b-3 border-[#666]" />
        </div>
        <a href="#">Conditions d'utilisation</a>
        <Svg className="size-3.5" box="0 0 14 16" width={2}>
          <rect x="3" y="4" width="8" height="10" rx="4" />
          <path d="M4 1l2 3M10 1L8 4M0 6h3M0 9h3M0 12h3M11 6h3M11 9h3M11 12h3M5 8h4M5 11h4" />
        </Svg>
      </div>
    </section>
  );
}

/* ---------- Tours panel ---------- */

function Checkbox({ label }: { label: string }) {
  const [checked, setChecked] = useState(true);
  return (
    <span className="relative size-[30px] shrink-0">
      <input
        type="checkbox"
        aria-label={label}
        checked={checked}
        onChange={() => setChecked(!checked)}
        className="block size-[30px] appearance-none rounded-[3px] border-2 border-[#2196f3] checked:bg-[#2196f3]"
      />
      {checked && (
        <Svg className="pointer-events-none absolute inset-0 size-[30px] text-white" box="0 0 30 30" width={3}>
          <path d="M4 16l7 7L26 7" />
        </Svg>
      )}
    </span>
  );
}

function Tag({ children, className }: { children: ReactNode; className: string }) {
  return <span className={clsx('flex h-[31px] items-center rounded-xs px-2.5 text-[17px] font-semibold', className)}>{children}</span>;
}

function CardHead({ name, agent, dot, checked, children }: { name?: string; agent: string; dot: string; checked?: boolean; children: ReactNode }) {
  return (
    <div className={clsx('flex items-center bg-[#efefef] px-3.5 text-xl text-black', name ? 'h-[73px]' : 'h-[60px]')}>
      {checked ? <Checkbox label={name ?? agent} /> : <span className="w-[30px]" />}
      <TargetIcon className="ml-4 size-[38px] text-[#222]" />
      <span className={clsx('ml-3.5 size-[34px] rounded-full border-2 border-black', dot)} />
      <div className="ml-3 flex-1 leading-7">
        {name && <div className="font-semibold">{name}</div>}
        <div>{agent}</div>
      </div>
      {children}
    </div>
  );
}

const METRIC_ICONS = [
  <FlagIcon className="h-[26px] w-6" />,
  <FinishIcon className="h-[26px] w-6" />,
  <RoadIcon className="h-6 w-8" />,
  <PlaceIcon className="h-7 w-5" />,
  <CarIcon className="h-6 w-7" />,
  <PersonIcon className="h-6 w-[22px]" />,
  <MoneyIcon className="h-5 w-[30px]" />,
];

function Metrics({ values }: { values: string[] }) {
  return (
    <div className="grid h-[70px] grid-cols-7 items-center pl-1 text-[17px] text-[#6e6e6e]">
      {values.map((value, i) => (
        <div key={i} className={clsx('flex items-center justify-center', i < 2 ? 'gap-1.5' : i > 2 && i < 6 ? 'gap-3' : 'gap-2')}>
          {METRIC_ICONS[i]}
          {value}
        </div>
      ))}
    </div>
  );
}

function MenuItem({ icon, children, active }: { icon: ReactNode; children: ReactNode; active?: boolean }) {
  return (
    <button className={clsx('relative flex h-20 w-full items-center text-left', active && 'border-6 border-[#1480fb] bg-[#f4f4f4]')}>
      <span className={clsx('flex justify-center', active ? 'w-[68px]' : 'ml-1 w-[70px]')}>{icon}</span>
      <span className="ml-3.5">{children}</span>
      {active && <Step n={3} />}
    </button>
  );
}

function Panel() {
  return (
    <section className="bg-white px-3.5 pt-[13px] pb-6">
      <button className="ml-1 flex h-11 w-[372px] items-center justify-center gap-3.5 rounded-full bg-[#efefef] text-[21px] text-[#6e6e6e]">
        <FunnelIcon className="size-4" />
        Voir les options d'affichage
      </button>

      <div className="mt-[13px] -mr-0.5 flex h-[100px] items-center bg-[#056cb2] pr-9 pl-[45px] text-white">
        <Checkbox label="Agents hors secteur" />
        <h2 className="ml-6 flex-1 text-xl font-semibold">Agents hors secteur</h2>
        <button aria-label="Replier">
          <Svg className="h-4 w-5" box="0 0 20 16" width={3}>
            <path d="M2 12l8-8 8 8" />
          </Svg>
        </button>
      </div>

      <div className="mt-3.5 ml-0.5 flex flex-col gap-3.5">
        <article className="rounded-xs border-2 border-gray-200">
          <CardHead checked name="Tournée 1" agent="Julia Fernandez | 607-BVS-57-2" dot="bg-[#df69d6]">
            <Tag className="bg-[#f3ecdf] text-[#f8c04c]">NON DEMARREE</Tag>
            <button aria-label="Actions de la tournée 1" className="mr-[27px] ml-14">
              <Dots />
            </button>
          </CardHead>
          <Metrics values={['08:00', '15:53', '86,58 km', '15', '1h15', '6h38', '349,11 €']} />
        </article>

        <article className="rounded-xs border-2 border-gray-200">
          <CardHead agent="Maria Fernandez |" dot="bg-[#5c82f5]">
            <Tag className="bg-[#e3e1f1] text-[#7367d8]">NON SOLLICITE</Tag>
          </CardHead>
          <Metrics values={['-- : --', '-- : --', '0 km', '0', '0min', '0min', '0 €']} />
        </article>

        <article className="relative rounded-xs border-2 border-gray-200">
          <CardHead checked name="Tournée 2" agent="Paul Wagner | AS-987-WX" dot="bg-[#a583e6]">
            <Tag className="bg-[#dfe7f0] text-[#4e9ae2]">EN COURS</Tag>
            <div role="progressbar" aria-valuenow={0} className="ml-3.5 flex h-[27px] w-[200px] items-center justify-center rounded-xs bg-[#b7bbbf] text-white">
              0 %
            </div>
            <button aria-label="Actions de la tournée 2" className="mr-[27px] ml-10">
              <Dots />
            </button>
          </CardHead>
          <div className="grid h-[86px] grid-cols-4 items-center text-[17px] leading-[26px] text-[#6e6e6e]">
            <div className="flex items-center justify-center gap-1.5">
              <FlagIcon className="h-[26px] w-6" />
              <div>
                <div className="line-through">08:00</div>
                <div>09:33</div>
              </div>
            </div>
            <div className="flex h-[50px] items-center justify-center gap-1.5 rounded-md bg-[#edf6fe] text-[#4e9ae2]">
              <FinishIcon className="h-[26px] w-6" />
              <div>
                <div className="line-through">16:14</div>
                <div>17:47</div>
              </div>
            </div>
            <div className="flex items-center justify-center gap-2">
              <RoadIcon className="h-6 w-8" />
              167,69 km
            </div>
          </div>

          <div className="absolute top-[62px] -right-px z-10 w-[337px] rounded-md bg-white py-[13px] text-[21px] text-[#333] shadow-[0_4px_18px_rgba(0,0,0,0.35)]">
            <MenuItem icon={<EyeIcon className="h-3.5 w-6" />}>Détail de la tournée</MenuItem>
            <MenuItem active icon={<CopyIcon className="size-5" />}>
              Dupliquer la tournée
            </MenuItem>
            <MenuItem icon={<CursorIcon className="h-5 w-3" />}>Renommer la tournée</MenuItem>
          </div>
        </article>
      </div>
    </section>
  );
}

export default function App() {
  return (
    <div className="flex min-h-screen bg-white px-[5px] pt-[9px] pb-[7px] font-[Inter,sans-serif]">
      <div className="flex flex-1 flex-col overflow-hidden rounded-[20px] border border-gray-300">
        <Header />
        <div className="flex flex-1">
          <Sidebar />
          <main className="flex min-w-0 flex-1 flex-col">
            <div className="flex h-[100px] items-center justify-between border-b-2 border-gray-200 pr-[49px] pl-[50px]">
              <h1 className="text-[30px] font-light text-[#cf672f]">Suivi en direct</h1>
              <button aria-label="Ajouter" className="flex size-[54px] items-center justify-center rounded-full bg-[#056cb2] text-white">
                <Svg className="size-6" box="0 0 24 24">
                  <path d="M12 0v24M0 12h24" />
                </Svg>
              </button>
            </div>
            <Stats />
            <div className="grid flex-1 grid-cols-[46.3%_1fr]">
              <MapView />
              <Panel />
            </div>
          </main>
        </div>
      </div>
    </div>
  );
}
